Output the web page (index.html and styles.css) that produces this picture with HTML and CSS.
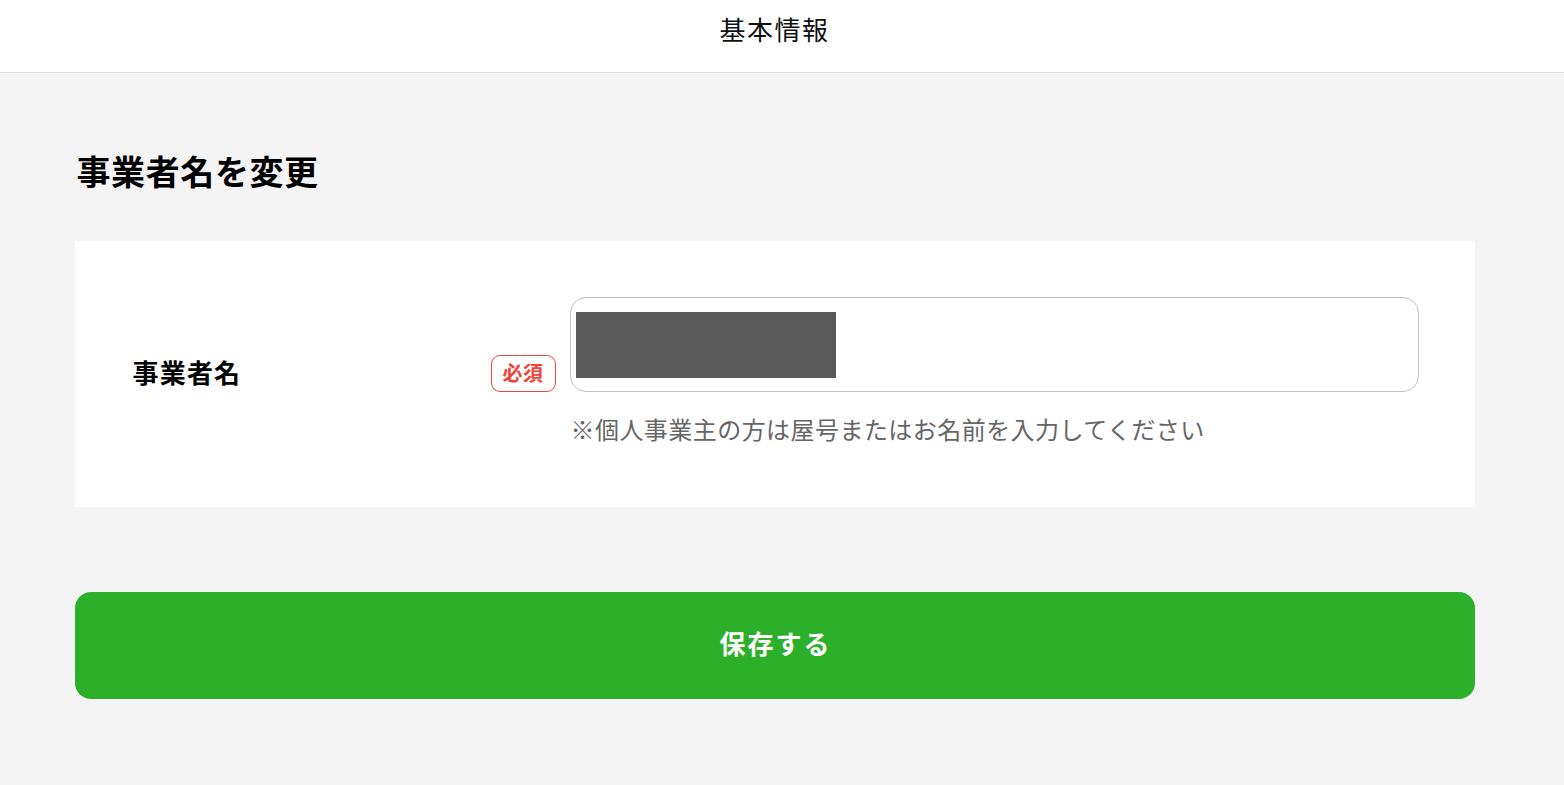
FILE: index.html
```html
<!DOCTYPE html>
<html lang="ja">
<head>
<meta charset="utf-8">
<title>基本情報</title>
<link rel="stylesheet" href="styles.css">
</head>
<body>
<header class="topbar">
  <h1 class="topbar-title">基本情報</h1>
</header>
<main class="main">
  <div class="container">
    <h2 class="page-heading">事業者名を変更</h2>
    <section class="card">
      <div class="field-row">
        <div class="field-label">
          <span class="label-text">事業者名</span>
          <span class="badge">必須</span>
        </div>
        <div class="field-body">
          <div class="input-box">
            <div class="redacted"></div>
          </div>
          <p class="help">※個人事業主の方は屋号またはお名前を入力してください</p>
        </div>
      </div>
    </section>
    <button class="save-btn" type="button">保存する</button>
  </div>
</main>
</body>
</html>
```

FILE: styles.css
```css
* { box-sizing: border-box; }
html, body { margin: 0; padding: 0; }
body {
  background: #f4f4f4;
  font-family: "Noto Sans CJK JP", "Noto Sans", sans-serif;
  color: #000;
  min-height: 785px;
}
.topbar {
  background: #fff;
  height: 73px;
  border-bottom: 1px solid #dcdcdc;
  padding-right: 15px;
  display: flex;
  justify-content: center;
}
.topbar-title {
  margin: 0;
  font-size: 26px;
  font-weight: 400;
  line-height: 58px;
  letter-spacing: 1.5px;
  color: #111;
}
.main {
  padding-right: 15px;
}
.container {
  width: 1400px;
  margin: 0 auto;
  padding-top: 76px;
}
.page-heading {
  margin: 0 0 0 2px;
  font-size: 34px;
  font-weight: 700;
  line-height: 44px;
  letter-spacing: 0.6px;
  height: 92px;
}
.card {
  background: #fff;
  padding: 56px 56px 60px 58px;
}
.field-row {
  display: flex;
  align-items: center;
  gap: 14px;
}
.field-label {
  width: 423px;
  display: flex;
  align-items: center;
  justify-content: space-between;
  padding-top: 2px;
}
.label-text {
  font-size: 26px;
  font-weight: 700;
  letter-spacing: 1.2px;
  line-height: 36px;
  padding-bottom: 2px;
}
.badge {
  width: 65px;
  height: 37px;
  border: 1px solid #f0443a;
  border-radius: 9px;
  color: #f0443a;
  font-size: 20px;
  font-weight: 700;
  display: flex;
  align-items: center;
  justify-content: center;
  letter-spacing: 0.5px;
  padding-bottom: 1px;
}
.field-body {
  flex: 1;
}
.input-box {
  height: 95px;
  border: 1px solid #c2c2c2;
  border-radius: 16px;
  padding: 14px 5px;
  background: #fff;
}
.redacted {
  width: 260px;
  height: 66px;
  background: #595959;
}
.help {
  margin: 19px 0 0 1px;
  font-size: 24px;
  line-height: 36px;
  color: #666;
  letter-spacing: 0.45px;
}
.save-btn {
  display: flex;
  align-items: center;
  justify-content: center;
  width: 100%;
  height: 107px;
  margin-top: 85px;
  border: none;
  border-radius: 16px;
  background: #2db029;
  color: #fff;
  font-family: "Noto Sans CJK JP", "Noto Sans", sans-serif;
  font-size: 26px;
  font-weight: 700;
  letter-spacing: 2px;
  padding: 0 0 6px 2px;
}
```
